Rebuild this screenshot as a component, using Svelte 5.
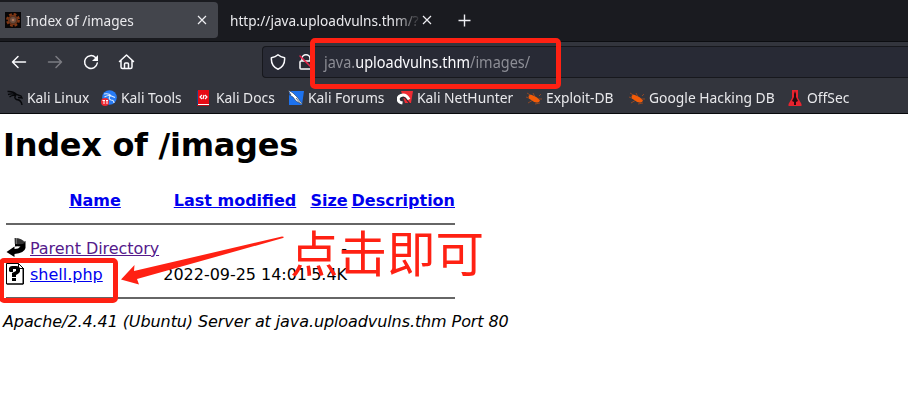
<script>
  const bookmarks = [
    { label: 'Kali Linux', icon: 'dragon', width: 94 },
    { label: 'Kali Tools', icon: 'tools', width: 95 },
    { label: 'Kali Docs', icon: 'docs', width: 92 },
    { label: 'Kali Forums', icon: 'forums', width: 109 },
    { label: 'Kali NetHunter', icon: 'hunter', width: 129 },
    { label: 'Exploit-DB', icon: 'bug', width: 103 },
    { label: 'Google Hacking DB', icon: 'bug', width: 158 },
    { label: 'OffSec', icon: 'offsec', width: 70 }
  ];
</script>

<main>
  <header>
    <nav class="tabs">
      <div class="tab active">
        <svg class="favicon" width="16" height="16" viewBox="0 0 16 16">
          <path fill="#080607" d="M0 0h16v16H0z" />
          <circle cx="8" cy="8" r="5.8" fill="none" stroke="#843914" stroke-width="2.3" stroke-dasharray="2.7 1.85" />
          <circle cx="8" cy="8" r="4.7" fill="#59331f" stroke="#7a3516" />
          <circle cx="8" cy="8" r="3" fill="#6e5142" />
          <circle cx="8" cy="8" r="1.3" fill="#b1785c" />
        </svg>
        <span class="label">Index of /images</span>
        <svg class="close" width="10" height="10" viewBox="0 0 10 10"><path d="M1 1l8 8M9 1L1 9" /></svg>
      </div>
      <div class="tab second">
        <span class="fade"><span class="label">http://java.uploadvulns.thm/?</span></span>
        <svg class="close" width="10" height="10" viewBox="0 0 10 10"><path d="M1 1l8 8M9 1L1 9" /></svg>
      </div>
      <svg class="plus" width="13" height="13" viewBox="0 0 13 13"><path d="M6.5 .5v12M.5 6.5h12" /></svg>
    </nav>
    <div class="toolbar">
      <svg class="controls" width="140" height="18" viewBox="0 0 140 18">
        <path d="M25.5 9H12.500M18 3.500L12.500 9l5.500 5.500" />
        <path class="disabled" d="M48.500 9h13M56 3.500L61.500 9 56 14.500" />
        <path d="M95.500 4.500A6.400 6.400 0 1 0 97.300 10" />
        <path fill="#fbfbfe" stroke="none" d="M98 2v6h-6z" />
        <path d="M119.500 8.500L126.500 2l7 6.500M121 7.500V14q0 1.500 1.500 1.500h8q1.500 0 1.500-1.500V7.500M124.500 15v-4q0-1 1-1h2q1 0 1 1v4" />
      </svg>
      <div class="address">
        <svg class="security" width="46" height="18" viewBox="0 0 46 18">
          <path d="M8 1.800C10 3.500 12 4.200 14.600 4.700C15 10 13 14 8 16.200C3 14 1 10 1.400 4.700C4 4.200 6 3.500 8 1.800Z" />
          <path d="M32 8V5.700a4 4 0 0 1 8 0V8M31 8h10q1 0 1 1v6q0 1-1 1H31q-1 0-1-1V9q0-1 1-1z" />
          <path class="slash" d="M30 3l13 13" />
        </svg>
        <span class="label url">java.<b>uploadvulns.thm</b>/images/</span>
      </div>
    </div>
    <nav class="bookmarks">
      {#each bookmarks as item}
        <div class="bookmark" style:width="{item.width}px">
          <svg width="16" height="16" viewBox="0 0 16 16">
            {#if item.icon === 'dragon'}
              <path d="M.5 1.500Q6 1 9.500 4.500L14 6l1 2-4-.5M1 4.500q4-1.500 8 .5M2.500 7Q5 5 8 5.500M9 5Q6.500 8 9.500 9.500q5 .5 5.500 5.500M9.500 9.500q3 0 4 2" fill="none" stroke="#06070a" stroke-width="1.400" />
            {:else if item.icon === 'tools'}
              <circle cx="8.500" cy="7.500" r="7.300" fill="#277bf4" />
              <path d="M3 4q5-1 7.500 2l3.500 1.500M3.500 7q4-2.500 7-1M9 6q-2 3 1 4 3 0 3 3" fill="none" stroke="#dceaff" stroke-width="1.100" />
              <circle cx="4" cy="12" r="4" fill="#ef2832" />
              <path d="M1.500 10.500H4m1 0h2M3 10.500V14m3-3.500V14" stroke="#fff" />
            {:else if item.icon === 'docs'}
              <path fill="#174585" d="M1 1l2-1v15l-2-1z" />
              <path fill="#e60b15" d="M2 0h11v14H2z" />
              <path d="M2 14.500h11" stroke="#fff" /><path d="M1 15.500h12" stroke="#b80d18" />
              <path d="M6 5L4 7l2 2m3-4l2 2-2 2M8 5L7 9" fill="none" stroke="#fff" stroke-width="1.200" />
            {:else if item.icon === 'forums'}
              <path fill="#1d72ee" d="M1 1h15l-2 14H1z" />
              <path d="M0 0l5 3 4 4 6 8-7-4-3-4L0 4l3 1z" fill="#fff" stroke="#172032" stroke-width=".5" />
              <path d="M8 8l5 6" stroke="#64758a" />
            {:else if item.icon === 'hunter'}
              <path fill="#f02b33" d="M4 1h12l-2 12H8z" />
              <path d="M5.500 13C0 12 0 7 4 5.500S10 6 12 9.500" fill="none" stroke="#fff" stroke-width="3" />
              <path d="M4.500 11C2 8 7 6 9 9l4 5" fill="none" stroke="#282834" stroke-width="1.200" />
            {:else if item.icon === 'bug'}
              <path d="M1 3l5 3m1-3l2 4m4-1l2-2m-3 5h4M2 13l5-3m2 4l5-1M0 7l5 2" stroke="#a34c21" stroke-width=".8" />
              <path d="M2.500 6q2-2 4.500-.5l4 2 3 3-1 1.500q-4 1.500-7-1.500l-3-2z" fill="#f35b08" />
            {:else}
              <path d="M5 0h6v8l3.500 6v2h-13v-2L5 8z" fill="#e8232e" />
              <path d="M8 1l1 3v3l2 4-2 1v3H7v-3l-2-1 2-4V4z" fill="#250b10" />
            {/if}
          </svg>
          <span class="label">{item.label}</span>
        </div>
      {/each}
    </nav>
  </header>

  <section>
    <h1>Index of /images</h1>
    <div class="listing">
      <div class="row head"><i></i><a href="#name">Name</a><a href="#modified">Last modified</a><a href="#size">Size</a><a href="#description">Description</a></div>
      <hr />
      <div class="row parent">
        <svg width="20" height="22" viewBox="0 0 20 22">
          <path d="M9 6q7 1 10.500-2v7q-1 5-11 6v3L.5 15l8-5.500V12q4 0 6-2.500-3-.5-5.500 0z" fill="#000" />
          <path d="M8.500 1q8 0 10.500 5-3 2-10 1z" fill="#333" />
          <path d="M8.500 1.500v6M10.500 1.500v5" fill="none" stroke="#aaa" stroke-dasharray="1 1" />
        </svg>
        <a class="visited" href="#parent">Parent Directory</a><span></span><span class="dash">-</span>
      </div>
      <div class="row file">
        <svg width="20" height="22" viewBox="0 0 20 22">
          <path d="M.5.500h12l4.500 4.500v16H.500z" fill="#fff" stroke="#000" />
          <path d="M12.500.500v5H17M17.500 5v16H1" fill="none" stroke="#000" />
          <path d="M3 8V5q1-2 3-2h4q4 0 4 3v2q0 2-4 4v2H6v-4l4-2V6H7v3H4z" />
          <path d="M6 15h4v3H6z" />
        </svg>
        <a href="#shell">shell.php</a><span>2022-09-25 14:01</span><span>5.4K</span>
      </div>
      <hr class="last" />
    </div>
    <address>Apache/2.4.41 (Ubuntu) Server at java.uploadvulns.thm Port 80</address>
  </section>

  <svg class="annotations" width="908" height="401" viewBox="0 0 908 401">
    <rect x="312.500" y="40.500" width="246" height="46" rx="2.500" />
    <rect x="1.500" y="260.500" width="114" height="40" rx="2.500" />
    <path d="M121 279.500L134.500 265l-.5 6L282 236.500q3 0 1 1.500L137 279l2 5.500z" />
  </svg>
  <span class="note">点击即可</span>
</main>

<style>
  main { position: relative; width: 908px; height: 401px; overflow: hidden; background: #fff; font-family: "DejaVu Sans", sans-serif; color: #000; }
  header { height: 114px; background: #33353d; color: #e9e9ec; font: 14.800px "Noto Sans", sans-serif; box-sizing: border-box; border-bottom: 1px solid #08090c; }
  .label { display: inline-block; white-space: nowrap; transform: scaleX(.935); transform-origin: left center; }
  .tabs { height: 42px; box-sizing: border-box; background: #1a1b20; border-bottom: 1px solid #0c0d11; display: flex; align-items: flex-start; padding-top: 2px; }
  .tab { height: 36px; display: flex; align-items: center; box-sizing: border-box; white-space: nowrap; }
  .active { background: #43454c; width: 218px; border-radius: 0 4px 4px 0; padding: 0 11px 0 5px; }
  .active .label { margin-left: 5px; flex: 1; transform: scaleX(.922); }
  .favicon { flex: none; }
  .second { width: 214px; padding-left: 12px; }
  .second .label { transform: scaleX(.92); }
  .fade { width: 192px; -webkit-mask-image: linear-gradient(90deg, #000 85%, transparent); mask-image: linear-gradient(90deg, #000 85%, transparent); }
  svg { display: block; flex: none; }
  .close, .plus { fill: none; stroke: #eeeef2; stroke-width: 1.2; }
  .plus { margin: 12px 0 0 26px; stroke-width: 1.4; }
  .toolbar { height: 40px; display: flex; align-items: center; box-sizing: border-box; }
  .controls, .security { fill: none; stroke: #fbfbfe; stroke-width: 1.5; stroke-linecap: round; stroke-linejoin: round; }
  .disabled { stroke: #7b7c82; }
  .address { width: 646px; height: 32px; box-sizing: border-box; margin-left: 122px; border: 1px solid #17181d; border-right: 0; border-radius: 4px 0 0 4px; background: #282a35; display: flex; align-items: center; padding-left: 7px; }
  .slash { stroke: #e8244b; }
  .url { color: #8c8d95; margin-left: 8px; font-size: 15.400px; transform: scaleX(.94); }
  .url b { font-weight: 400; color: #fbfbfe; }
  .bookmarks { height: 31px; display: flex; align-items: center; padding-left: 7px; }
  .bookmark { display: flex; align-items: center; white-space: nowrap; flex: none; }
  .bookmark .label { margin: -2px 0 0 4px; }
  section { padding: 12px 3px; }
  h1 { margin: 0; font-size: 32px; line-height: 38px; font-weight: 700; letter-spacing: -.28px; }
  .listing { width: 449px; margin: 24px 0 0 3px; font-size: 16px; }
  .row { display: grid; grid-template-columns: 24px 130px 147px 41px 107px; align-items: center; white-space: nowrap; }
  .row a { color: #00e; text-decoration: underline; }
  .row .visited { color: #551a8b; letter-spacing: -.06px; }
  .head { height: 24px; font-weight: 700; text-align: center; }
  .head a:nth-child(3) { padding-left: 3px; }
  .head a:nth-child(4) { padding-left: 3px; }
  .head a:last-child { text-align: right; }
  hr { height: 2px; border: 0; background: #666; margin: 11px 0 10px; }
  .last { margin-top: 10px; }
  .parent { height: 26px; }
  .file { height: 26px; }
  .parent span, .file span { text-align: right; letter-spacing: -.03px; }
  .parent .dash { padding-right: 1px; }
  .file span:last-child { padding-right: 1px; }
  address { font: italic 16px/20px "DejaVu Sans", sans-serif; letter-spacing: -.095px; margin-top: 13px; white-space: nowrap; }
  .annotations { position: absolute; inset: 0; }
  .annotations rect { fill: none; stroke: #ff2113; stroke-width: 5; }
  .annotations path { fill: #ff2113; }
  .note { position: absolute; left: 290px; top: 216px; color: #ff2113; font: 48.500px/70px "Noto Sans CJK SC", sans-serif; white-space: nowrap; }
</style>
